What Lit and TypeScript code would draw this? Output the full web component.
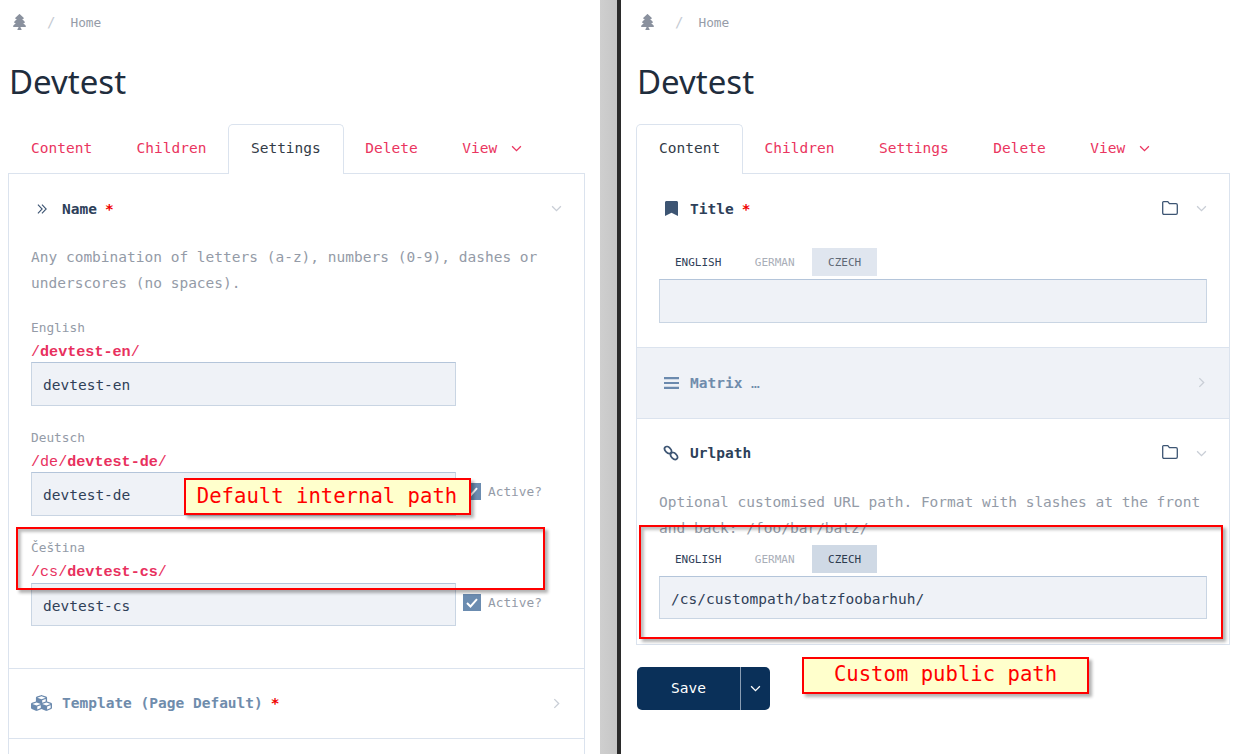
import { LitElement, html, css, svg } from "lit";
import { customElement } from "lit/decorators.js";

const tree = svg`<svg class="tree" viewBox="0 0 384 512" preserveAspectRatio="none"><path fill="currentColor" d="M378.31 378.49L298.42 288h30.63c9.01 0 16.98-5 20.78-13.06 3.8-8.04 2.55-17.26-3.28-24.05L268.42 160h28.89c9.1 0 17.3-5.35 20.86-13.61 3.52-8.13 1.86-17.59-4.24-24.08L203.66 4.83c-6.03-6.45-17.28-6.45-23.32 0L70.06 122.31c-6.1 6.49-7.75 15.95-4.24 24.08C69.38 154.65 77.59 160 86.69 160h28.89l-78.14 90.91c-5.81 6.78-7.06 15.99-3.27 24.04C37.97 283 45.93 288 54.95 288h30.63L5.69 378.49c-6 6.79-7.36 16.09-3.56 24.26 3.75 8.05 12 13.25 21.01 13.25H160v24.45l-30.29 48.4c-5.32 10.64 2.42 23.16 14.31 23.16h95.96c11.89 0 19.63-12.52 14.31-23.16L224 440.45V416h136.86c9.01 0 17.26-5.2 21.01-13.25 3.8-8.17 2.44-17.47-3.56-24.26z"/></svg>`;
const chevDown = svg`<svg class="chev" viewBox="0 0 12 8"><path d="M1 1.5l5 5 5-5" fill="none" stroke="currentColor" stroke-width="1.5"/></svg>`;
const chevRight = svg`<svg class="chevr" viewBox="0 0 8 12"><path d="M1.5 1l5 5-5 5" fill="none" stroke="currentColor" stroke-width="1.5"/></svg>`;
const folder = svg`<svg class="folder" viewBox="0 0 16 14"><path d="M1.5.7h4.3l1.6 2h6.6q1.3 0 1.3 1.3v8q0 1.3-1.3 1.3H2q-1.3 0-1.3-1.3V1.5q0-.8.8-.8z" fill="none" stroke="#3d5573" stroke-width="1.3"/></svg>`;
const dbl = svg`<span class="slot"><svg class="i-dbl" viewBox="0 0 12 12"><path d="M1 1.2l4.6 4.8L1 10.8M5.4 1.2L10 6l-4.6 4.8" fill="none" stroke="#3d5573" stroke-width="1.2"/></svg></span>`;
const bookmark = svg`<span class="slot"><svg class="i-book" viewBox="0 0 384 512" preserveAspectRatio="none"><path fill="#3d5573" d="M0 512V48C0 21.49 21.49 0 48 0h288c26.51 0 48 21.49 48 48v464L192 400 0 512z"/></svg></span>`;
const bars = svg`<span class="slot"><svg class="i-bars" viewBox="0 0 15 12"><path d="M0 1.2h15M0 6h15M0 10.8h15" stroke="#6b8aae" stroke-width="2.2"/></svg></span>`;
const link = svg`<span class="slot"><svg class="i-link" viewBox="0 0 16 16"><g fill="none" stroke="#3d5573" stroke-width="1.7"><ellipse cx="5" cy="5" rx="4" ry="2.7" transform="rotate(45 5 5)"/><ellipse cx="11" cy="11" rx="4" ry="2.7" transform="rotate(45 11 11)"/></g></svg></span>`;
const cubes = svg`<span class="slot"><svg class="i-cubes" viewBox="0 0 512 512" preserveAspectRatio="none"><path fill="#6b8aae" d="M488.6 250.2L392 214V105.5c0-15-9.3-28.4-23.4-33.7l-100-37.5c-8.1-3.1-17.1-3.1-25.3 0l-100 37.5c-14.1 5.3-23.4 18.7-23.4 33.7V214l-96.6 36.2C9.3 255.5 0 268.9 0 283.9V394c0 13.6 7.7 26.1 19.9 32.2l100 50c10.1 5.1 22.1 5.1 32.2 0l103.9-52 103.9 52c10.1 5.1 22.1 5.1 32.2 0l100-50c12.2-6.1 19.9-18.6 19.9-32.2V283.9c0-15-9.3-28.4-23.4-33.7zM358 214.8l-85 31.9v-68.2l85-37v73.3zM154 104.1l102-38.2 102 38.2v.6l-102 41.4-102-41.4v-.6zm84 291.1l-85 42.5v-79.1l85-38.8v75.4zm0-112l-102 41.4-102-41.4v-.6l102-38.2 102 38.2v.6zm240 112l-85 42.5v-79.1l85-38.8v75.4zm0-112l-102 41.4-102-41.4v-.6l102-38.2 102 38.2v.6z"/></svg></span>`;
const check = svg`<svg viewBox="0 0 18 17" class="check"><path d="M4 9l3.5 3.5L14 5.2" fill="none" stroke="#fff" stroke-width="2"/></svg>`;

@customElement("app-root")
export class AppRoot extends LitElement {
  static styles = css`
    :host { display: block; position: relative; width: 1239px; height: 754px; overflow: hidden; background: #fff;
      font-family: "DejaVu Sans Mono", monospace; font-size: 14.5px; color: #2d4059; }
    .split { display: flex; height: 754px; }
    .pane { overflow: hidden; height: 754px; box-sizing: border-box; }
    .pane.left { width: 600px; padding: 0 15px 0 8px; }
    .pane.right { flex: 1; padding: 0 9px 0 15px; }
    .gutter { width: 17px; background: linear-gradient(90deg, #cfcfcf, #c6c6c6); }
    .edge { width: 4px; background: #2b2b2b; }
    .crumbs { display: flex; align-items: center; height: 44px; font-size: 12.8px; color: #969ca8; padding-left: 5px; }
    .tree { width: 13px; height: 16px; color: #8a919e; margin-top: -1px; }
    .slash { color: #c5cad3; margin-left: 21px; margin-right: 15px; font-size: 14px; }
    h1 { margin: 0 0 0 1px; height: 80px; font: 400 33px/76px "Noto Sans", sans-serif; color: #1f2d3d; }
    .tabs { display: flex; height: 50px; }
    .tab { box-sizing: border-box; height: 50px; padding: 0 22px 3px; border: 1px solid transparent; border-bottom: 0;
      margin-right: -1.5px; color: #ea3560; display: flex; align-items: center; gap: 14px; white-space: nowrap; }
    .tab.current { background: #fff; border-color: #dbe3ee; border-radius: 5px 5px 0 0; color: #333b47; position: relative; z-index: 1; }
    .chev { width: 11px; height: 7px; display: block; }
    .panel { border: 1px solid #dbe3ee; margin-top: -1px; }
    .head { box-sizing: border-box; height: 70px; padding: 0 22px 1px 27px; display: flex; align-items: center; font-weight: 700; color: #2d4059; }
    .head.short { height: 69px; padding-bottom: 0; }
    .head.matrix { padding-bottom: 0; }
    .slot { width: 26px; flex: none; display: flex; align-items: center; }
    .slot svg { display: block; }
    .i-dbl { width: 11px; height: 12px; margin-left: 1px; }
    .i-book { width: 13px; height: 15px; margin-left: 1px; }
    .i-bars { width: 15px; height: 12px; }
    .i-link { width: 16px; height: 16px; margin-left: -1px; }
    .i-cubes { width: 21px; height: 18px; margin-left: -5px; }
    .t { flex: 1; }
    .req { color: #f00000; margin-left: 8px; }
    .head .chev { color: #c9ced6; }
    .chevr { width: 7px; height: 11px; color: #c9ced6; margin-right: 2px; }
    .folder { width: 16px; height: 14px; margin-right: 18px; margin-top: -2px; }
    .section { border-top: 1px solid #dbe3ee; }
    .section.grey { background: #eff2f7; }
    .muted { color: #6f8cac; }
    .body { padding: 0 22px; }
    .desc { margin: 0; line-height: 26px; color: #949ba7; }
    .field { margin-top: 21.4px; }
    .field:first-of-type { margin-top: 21px; }
    .label { height: 20px; line-height: 22px; font-size: 12.8px; color: #949ba7; }
    .path { height: 25.2px; line-height: 30px; font-family: "Liberation Mono", monospace; font-size: 15.1px; color: #e8305e; }
    .path b { font-weight: 700; }
    .row { display: flex; align-items: flex-start; }
    .input { box-sizing: border-box; height: 43.6px; background: #eff2f7; border: 1px solid #c9d5e3; border-top-color: #b4c5da;
      padding: 0 11px; line-height: 44px; color: #2f4058; width: 100%; white-space: nowrap; }
    .row .input { width: 425px; flex: none; }
    .cb { width: 18px; height: 17px; background: #6b8cb0; margin: 11px 7px 0 7px; flex: none; }
    .check { display: block; width: 18px; height: 17px; }
    .active { font-size: 12.8px; color: #949ba7; margin-top: 11px; line-height: 18px; }
    .langs { display: flex; height: 28px; gap: 1.5px; margin-bottom: 3px; font-size: 11px; line-height: 30px; }
    .lang { padding: 0 16px; color: #2f4058; }
    .lang.off { color: #a9aeb8; }
    .lang.sel { background: #e0e6ef; color: #5e6875; }
    .lang.sel.strong { background: #cfd9e5; color: #2b3a4e; }
    .pad-title { padding-top: 4px; padding-bottom: 24px; }
    .pad-name { padding-bottom: 41.5px; }
    .pad-url { padding-bottom: 25px; }
    .gap-desc { margin-bottom: 4px; }
    .ellipsis { font-weight: 400; }
    .save { display: flex; width: 133px; height: 43px; margin: 21.5px 0 0 1px; background: #0a3059; color: #fff; border-radius: 5px;
      line-height: 43px; }
    .save .lbl { width: 103px; text-align: center; }
    .save .sep { width: 1px; background: #8a9db3; }
    .save .dd { flex: 1; display: flex; align-items: center; justify-content: center; }
    .note { position: absolute; box-sizing: border-box; border: 2px solid #f00; background: #ffc; color: #f00; font-size: 20.6px;
      white-space: nowrap; box-shadow: 3px 3px 3px rgba(0,0,0,.3); text-align: center; }
    .frame { position: absolute; box-sizing: border-box; border: 2px solid #f00;
      box-shadow: 3px 3px 3px rgba(0,0,0,.3), inset 3px 3px 3px rgba(0,0,0,.25); }
    .n1 { left: 184px; top: 478px; width: 287px; height: 37px; line-height: 32px; padding-right: 1px; }
    .n2 { left: 802px; top: 657px; width: 287px; height: 37px; line-height: 31px; }
    .f1 { left: 16px; top: 527px; width: 529px; height: 63px; }
    .f2 { left: 639px; top: 525px; width: 584px; height: 114px; }
    .tailrow { height: 30px; }
  `;

  private crumbs() {
    return html`<div class="crumbs">${tree}<span class="slash">/</span><span>Home</span></div><h1>Devtest</h1>`;
  }

  private tabs(active: string) {
    return html`<div class="tabs">
      ${["Content", "Children", "Settings", "Delete"].map(
        (t) => html`<div class="tab ${t === active ? "current" : ""}">${t}</div>`
      )}
      <div class="tab">View ${chevDown}</div>
    </div>`;
  }

  private field(label: string, pre: string, slug: string, active: boolean) {
    return html`<div class="field">
      <div class="label">${label}</div>
      <div class="path">${pre}/<b>${slug}</b>/</div>
      <div class="row"><div class="input">${slug}</div>
        ${active ? html`<div class="cb">${check}</div><div class="active">Active?</div>` : ""}
      </div>
    </div>`;
  }

  private langs(strong: boolean) {
    return html`<div class="langs">
      <div class="lang">ENGLISH</div><div class="lang off">GERMAN</div>
      <div class="lang sel ${strong ? "strong" : ""}">CZECH</div>
    </div>`;
  }

  render() {
    return html`
      <div class="split">
        <div class="pane left">
          ${this.crumbs()} ${this.tabs("Settings")}
          <div class="panel">
            <div class="head">${dbl}<span class="t">Name<span class="req">*</span></span>${chevDown}</div>
            <div class="body pad-name">
              <p class="desc">Any combination of letters (a-z), numbers (0-9), dashes or underscores (no spaces).</p>
              ${this.field("English", "", "devtest-en", false)}
              ${this.field("Deutsch", "/de", "devtest-de", true)}
              ${this.field("Čeština", "/cs", "devtest-cs", true)}
            </div>
            <div class="section"><div class="head short muted">${cubes}<span class="t">Template (Page Default)<span class="req">*</span></span>${chevRight}</div></div>
            <div class="section tailrow"></div>
          </div>
        </div>
        <div class="gutter"></div>
        <div class="edge"></div>
        <div class="pane right">
          ${this.crumbs()} ${this.tabs("Content")}
          <div class="panel">
            <div class="head">${bookmark}<span class="t">Title<span class="req">*</span></span>${folder}${chevDown}</div>
            <div class="body pad-title">
              ${this.langs(false)}
              <div class="input"></div>
            </div>
            <div class="section grey"><div class="head matrix muted">${bars}<span class="t">Matrix <span class="ellipsis">…</span></span>${chevRight}</div></div>
            <div class="section">
              <div class="head">${link}<span class="t">Urlpath</span>${folder}${chevDown}</div>
              <div class="body pad-url">
                <p class="desc gap-desc">Optional customised URL path. Format with slashes at the front and back: /foo/bar/batz/</p>
                ${this.langs(true)}
                <div class="input">/cs/custompath/batzfoobarhuh/</div>
              </div>
            </div>
          </div>
          <div class="save"><span class="lbl">Save</span><span class="sep"></span><span class="dd">${chevDown}</span></div>
        </div>
      </div>
      <div class="note n1">Default internal path</div>
      <div class="note n2">Custom public path</div>
      <div class="frame f1"></div>
      <div class="frame f2"></div>
    `;
  }
}
